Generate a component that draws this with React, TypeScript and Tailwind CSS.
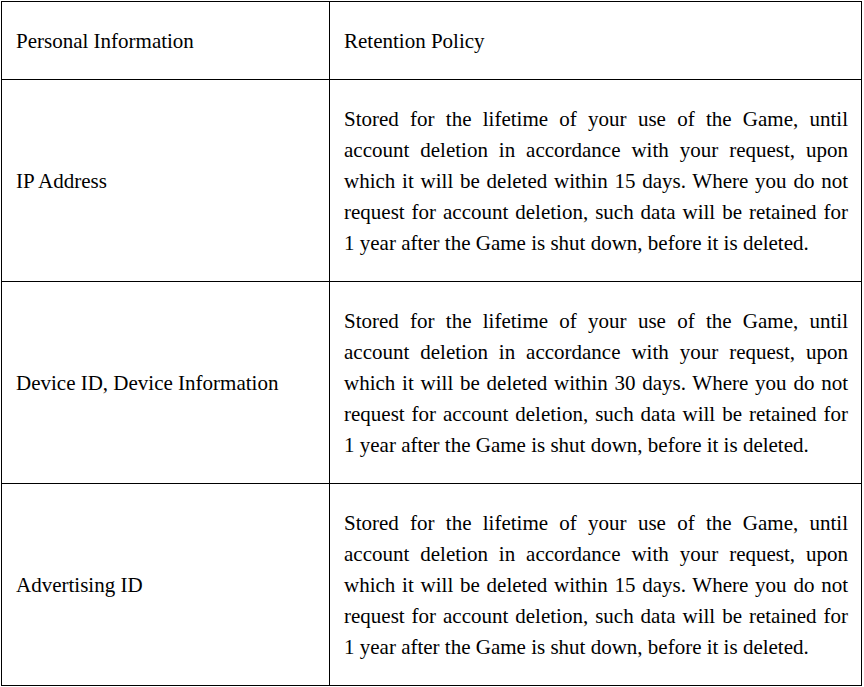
import React from 'react'

type Row = {
  label: string
  days: number
}

const rows: Row[] = [
  { label: 'IP Address', days: 15 },
  { label: 'Device ID, Device Information', days: 30 },
  { label: 'Advertising ID', days: 15 },
]

const policyText = (days: number) =>
  `Stored for the lifetime of your use of the Game, until account deletion in accordance with your request, upon which it will be deleted within ${days} days. Where you do not request for account deletion, such data will be retained for 1 year after the Game is shut down, before it is deleted.`

const App = () => {
  return (
    <div
      className="min-h-screen bg-white pt-px pl-px text-black text-[21px] leading-[31px]"
      style={{ fontFamily: '"Liberation Serif", "Times New Roman", serif' }}
    >
      <div className="grid w-[861px] grid-cols-[328px_532px] border-l border-t border-black">
        <div className="border-r border-b border-black pt-[24px] pb-[22px] pl-[14px] pr-[13px]">Personal Information</div>
        <div className="border-r border-b border-black pt-[24px] pb-[22px] pl-[14px] pr-[13px]">Retention Policy</div>

        {rows.map(row => (
          <React.Fragment key={row.label}>
            <div className="flex items-center border-r border-b border-black pt-[24px] pb-[22px] pl-[14px] pr-[13px]">
              {row.label}
            </div>
            <div className="border-r border-b border-black pt-[24px] pb-[22px] pl-[14px] pr-[13px] text-justify">
              {policyText(row.days)}
            </div>
          </React.Fragment>
        ))}
      </div>
    </div>
  )
}

export default App
